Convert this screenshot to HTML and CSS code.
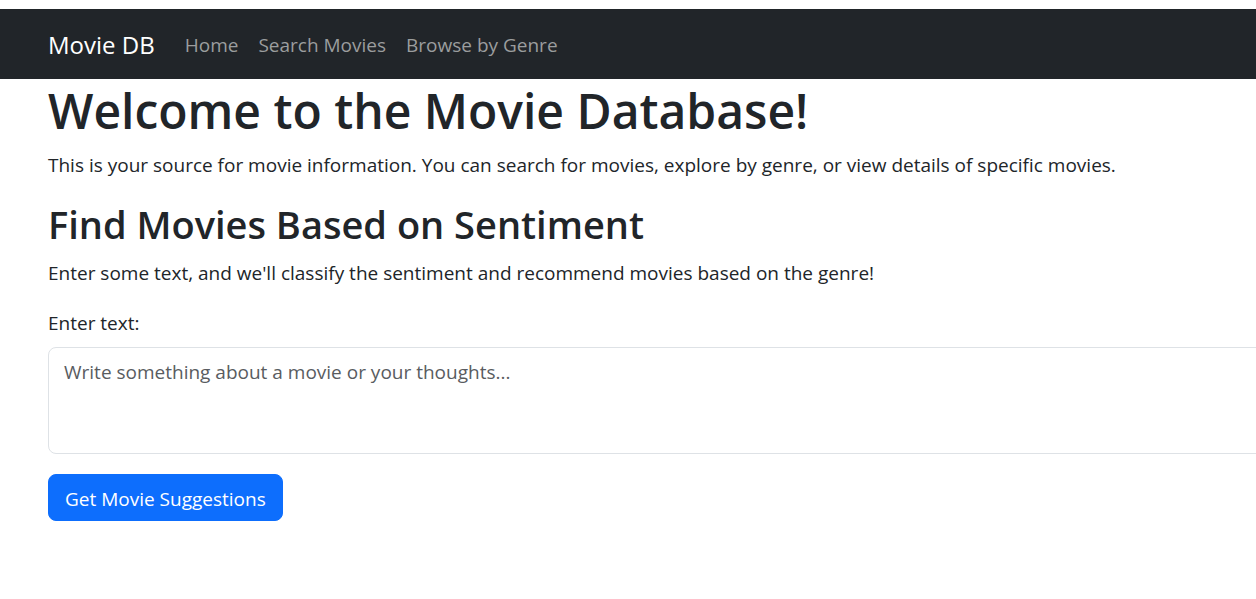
FILE: index.html
```html
<!DOCTYPE html>
<html lang="en">
<head>
<meta charset="utf-8">
<title>Movie DB</title>
<link rel="stylesheet" href="styles.css">
</head>
<body>
<nav class="navbar">
  <a class="brand" href="#">Movie DB</a>
  <a class="nav-link" href="#">Home</a>
  <a class="nav-link" href="#">Search Movies</a>
  <a class="nav-link" href="#">Browse by Genre</a>
</nav>
<main class="container">
  <h1 class="title">Welcome to the Movie Database!</h1>
  <p class="text">This is your source for movie information. You can search for movies, explore by genre, or view details of specific movies.</p>
  <h2 class="subtitle">Find Movies Based on Sentiment</h2>
  <p class="text">Enter some text, and we'll classify the sentiment and recommend movies based on the genre!</p>
  <form class="form">
    <label class="label" for="text">Enter text:</label>
    <textarea class="control" id="text" placeholder="Write something about a movie or your thoughts..."></textarea>
    <button class="button" type="submit">Get Movie Suggestions</button>
  </form>
</main>
</body>
</html>
```
FILE: styles.css
```css
* {
  box-sizing: border-box;
}

body {
  margin: 0;
  padding-top: 9px;
  overflow-x: hidden;
  background: #fff;
  color: #212529;
  font-family: "Segoe UI", "Open Sans", "Noto Sans", sans-serif;
  font-size: 19px;
  line-height: 30px;
}

.navbar {
  display: flex;
  align-items: center;
  gap: 20px;
  padding: 16px 48px 14px;
  background: #212529;
  line-height: 40px;
}

.brand {
  margin-right: 10px;
  color: #fff;
  font-size: 24px;
  text-decoration: none;
}

.nav-link {
  color: #9b9d9e;
  text-decoration: none;
}

.container {
  margin-right: -64px;
  padding: 0 48px;
}

.title,
.subtitle {
  margin: 0;
  font-weight: 550;
}

.title {
  padding: 2px 0 9px;
  font-size: 48px;
  line-height: 60px;
}

.subtitle {
  padding-bottom: 10px;
  font-size: 38px;
  line-height: 48px;
}

.text {
  margin: 0 0 20px;
}

.label {
  display: block;
  margin-bottom: 9px;
}

.control {
  display: block;
  width: 100%;
  height: 107px;
  margin-bottom: 20px;
  padding: 9px 15px;
  border: 1px solid #dee2e6;
  border-radius: 8px;
  background: #fff;
  font: inherit;
  resize: none;
}

.control::placeholder {
  color: #595c5f;
  opacity: 1;
}

.button {
  padding: 9px 16px 6px;
  border: 1px solid #0d6efd;
  border-radius: 8px;
  background: #0d6efd;
  color: #fff;
  font: inherit;
}
```
